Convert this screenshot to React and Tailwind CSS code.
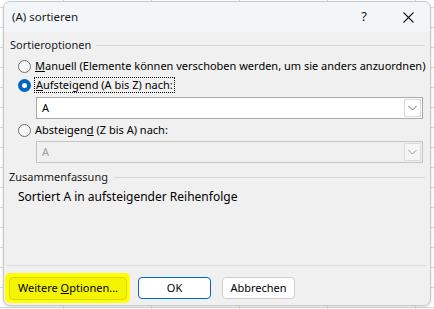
import React from "react";

const font = { fontFamily: '"Segoe UI", "Noto Sans", "Open Sans", sans-serif' };

function Radio({ checked }) {
  return checked ? (
    <span className="flex h-[13px] w-[13px] shrink-0 items-center justify-center rounded-full bg-[#0067c0]">
      <span className="h-[5px] w-[5px] rounded-full bg-white" />
    </span>
  ) : (
    <span className="h-[13px] w-[13px] shrink-0 rounded-full border border-[#6e6e6e] bg-[#f7f7f7]" />
  );
}

function Chevron({ color }) {
  return (
    <svg width="9" height="6" viewBox="0 0 9 6" fill="none">
      <path d="M0.5 1 L4.5 5 L8.5 1" stroke={color} strokeWidth="1" />
    </svg>
  );
}

function Combo({ disabled }) {
  return (
    <div
      className={
        "ml-[32px] mr-[7px] flex h-[22px] items-center border " +
        (disabled ? "border-[#c4c4c4] bg-[#f0f0f0]" : "border-[#a9a9a9] bg-white")
      }
    >
      <span className={"flex-1 pl-[5px] text-[11px] " + (disabled ? "text-[#a0a0a0]" : "text-black")}>A</span>
      <span
        className={
          "mr-px flex h-[18px] w-[17px] items-center justify-center border " +
          (disabled ? "border-[#dadada] bg-[#f5f5f5]" : "border-[#dadada] bg-white")
        }
      >
        <Chevron color={disabled ? "#9a9a9a" : "#707070"} />
      </span>
    </div>
  );
}

export default function App() {
  return (
    <div
      className="h-[309px] w-[434px] overflow-hidden bg-white pl-[3px] pt-[1px]"
      style={{
        ...font,
        backgroundImage:
          "linear-gradient(to right, #d9d9d9 1px, transparent 1px), linear-gradient(to bottom, #d9d9d9 1px, transparent 1px)",
        backgroundSize: "88px 20px",
        backgroundPosition: "63px 7px",
      }}
    >
      <div className="flex h-[305px] w-[428px] flex-col overflow-hidden rounded-[7px] border border-[#c8c8c8] bg-[#f0f0f0] shadow-[0_1px_3px_rgba(0,0,0,0.15)]">
        {/* title bar */}
        <div className="flex h-[30px] shrink-0 items-center bg-[#f3f6f9] pl-[8px]">
          <span className="flex-1 text-[11.5px] text-[#1a1a1a]">(A) sortieren</span>
          <span className="mr-[36px] text-[13px] text-[#1a1a1a]">?</span>
          <svg className="mr-[16px]" width="11" height="11" viewBox="0 0 11 11">
            <path d="M0.5 0.5 L10.5 10.5 M10.5 0.5 L0.5 10.5" stroke="#1a1a1a" strokeWidth="1.1" />
          </svg>
        </div>

        {/* body */}
        <div className="flex flex-1 flex-col text-[11px] text-black">
          <div className="mt-[6px] flex h-[15px] items-center pl-[6px] pr-[5px]">
            <span className="text-[#1a1a2e]">Sortieroptionen</span>
            <span className="ml-[5px] h-px flex-1 bg-[#d8d8d8]" />
          </div>

          <div className="mt-[5px] flex h-[16px] items-center pl-[14px]">
            <Radio />
            <span className="ml-[4px] whitespace-nowrap">
              <u>M</u>anuell (Elemente können verschoben werden, um sie anders anzuordnen)
            </span>
          </div>

          <div className="mt-[3px] flex h-[16px] items-center pl-[14px]">
            <Radio checked />
            <span className="ml-[3px] border border-dotted border-black px-px leading-[14px]">
              <u>A</u>ufsteigend (A bis Z) nach:
            </span>
          </div>

          <div className="mt-[4px]">
            <Combo />
          </div>

          <div className="mt-[3px] flex h-[16px] items-center pl-[14px]">
            <Radio />
            <span className="ml-[4px]">
              Absteigen<u>d</u> (Z bis A) nach:
            </span>
          </div>

          <div className="mt-[3px]">
            <Combo disabled />
          </div>

          <div className="mt-[7px] flex h-[15px] items-center pl-[5px] pr-[5px]">
            <span className="text-[#1a1a1a]">Zusammenfassung</span>
            <span className="ml-[6px] h-px flex-1 bg-[#d8d8d8]" />
          </div>

          <div className="mt-[4px] h-[16px] pl-[14px] text-[12px] leading-[16px]">
            Sortiert A in aufsteigender Reihenfolge
          </div>

          <div className="flex-1" />

          <div className="mx-[3px] h-px shrink-0 bg-[#dcdcdc]" />

          <div className="flex h-[39px] shrink-0 items-start pl-px pt-[7px]">
            <div className="flex h-[30px] w-[125px] items-center rounded-[5px] bg-[#ffff00] pl-[4px]">
              <button className="h-[23px] w-[118px] rounded-[4px] border border-[#d8d800] bg-[#f4f400] text-[11px] text-black">
                Weitere <u>O</u>ptionen...
              </button>
            </div>
            <button className="ml-[8px] mt-[4px] h-[22px] w-[73px] rounded-[4px] border border-[#0067c0] bg-white text-[11px] text-black">
              OK
            </button>
            <button className="ml-[11px] mt-[4px] h-[22px] w-[73px] rounded-[4px] border border-[#d0d0d0] bg-[#fdfdfd] text-[11px] text-black">
              Abbrechen
            </button>
          </div>
        </div>
      </div>
    </div>
  );
}
